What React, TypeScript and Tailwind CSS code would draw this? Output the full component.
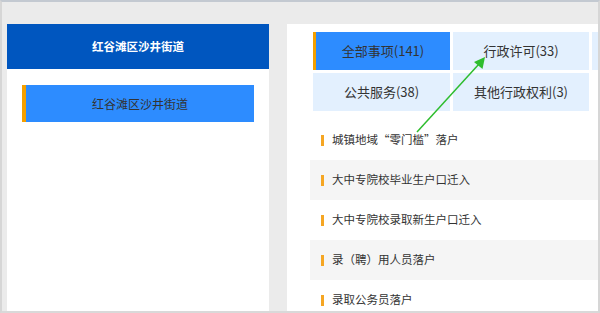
import React from 'react';

const tabsRow1 = [
  { label: '全部事项(141)', active: true, w: 'w-[137px]' },
  { label: '行政许可(33)', active: false, w: 'w-[136px]' },
  { label: '', active: false, w: 'w-[136px]' },
];

const tabsRow2 = [
  { label: '公共服务(38)', active: false, w: 'w-[137px]' },
  { label: '其他行政权利(3)', active: false, w: 'w-[136px]' },
];

const items = [
  '城镇地域“零门槛”落户',
  '大中专院校毕业生户口迁入',
  '大中专院校录取新生户口迁入',
  '录（聘）用人员落户',
  '录取公务员落户',
];

function Tab({ label, active, w }: { label: string; active: boolean; w: string }) {
  return (
    <div
      className={`${w} h-[38px] shrink-0 flex items-center justify-center text-[13px] text-[#333] ${
        active ? 'bg-[#2d8cff] border-l-[3px] border-[#f5a000]' : 'bg-[#e3f0fe]'
      }`}
    >
      {label}
    </div>
  );
}

export default function App() {
  return (
    <div
      className="relative w-[600px] h-[313px] overflow-hidden bg-[#ebebeb] border-t-2 border-t-[#c3c9d1] border-l-2 border-l-[#d6d6d6] border-r-2 border-r-[#d6d6d6] border-b-2 border-b-[#d9d9d9] flex pl-[5px] pt-[22px] gap-[18px]"
      style={{ fontFamily: '"Noto Sans CJK SC", "Noto Sans", sans-serif' }}
    >
      {/* left panel */}
      <div className="w-[262px] shrink-0 bg-white flex flex-col">
        <div className="h-[45px] bg-[#0056bf] flex items-center justify-center text-white text-[11.5px] font-bold">
          红谷滩区沙井街道
        </div>
        <div className="px-[15px] pt-[16px]">
          <div className="h-[37px] bg-[#2d8cff] border-l-4 border-[#f5a000] flex items-center justify-center text-[12px] text-[#333]">
            红谷滩区沙井街道
          </div>
        </div>
      </div>

      {/* right panel */}
      <div className="flex-1 bg-white pl-[23px] pt-[8px] overflow-hidden">
        <div className="ml-[3px] flex flex-col gap-[3px]">
          <div className="flex gap-[3px]">
            {tabsRow1.map((t, i) => (
              <Tab key={i} {...t} />
            ))}
          </div>
          <div className="flex gap-[3px]">
            {tabsRow2.map((t, i) => (
              <Tab key={i} {...t} />
            ))}
          </div>
        </div>

        <div className="mt-[9px] flex flex-col">
          {items.map((it, i) => (
            <div
              key={i}
              className={`h-[40px] flex items-center pl-[11px] ${i % 2 === 1 ? 'bg-[#f5f5f5]' : 'bg-white'}`}
            >
              <span className="w-[3px] h-[11px] bg-[#f5a623] mr-[8px]" />
              <span className="text-[11.5px] text-[#333]">{it}</span>
            </div>
          ))}
        </div>
      </div>

      {/* annotation arrow */}
      <svg
        className="absolute left-[-2px] top-[-2px] pointer-events-none"
        width="600"
        height="313"
        viewBox="0 0 600 313"
      >
        <line x1="417" y1="132" x2="479" y2="64" stroke="#2ebd2e" strokeWidth="1.5" />
        <polygon points="485,57 482.5,69 474,62" fill="#2ebd2e" />
      </svg>
    </div>
  );
}
